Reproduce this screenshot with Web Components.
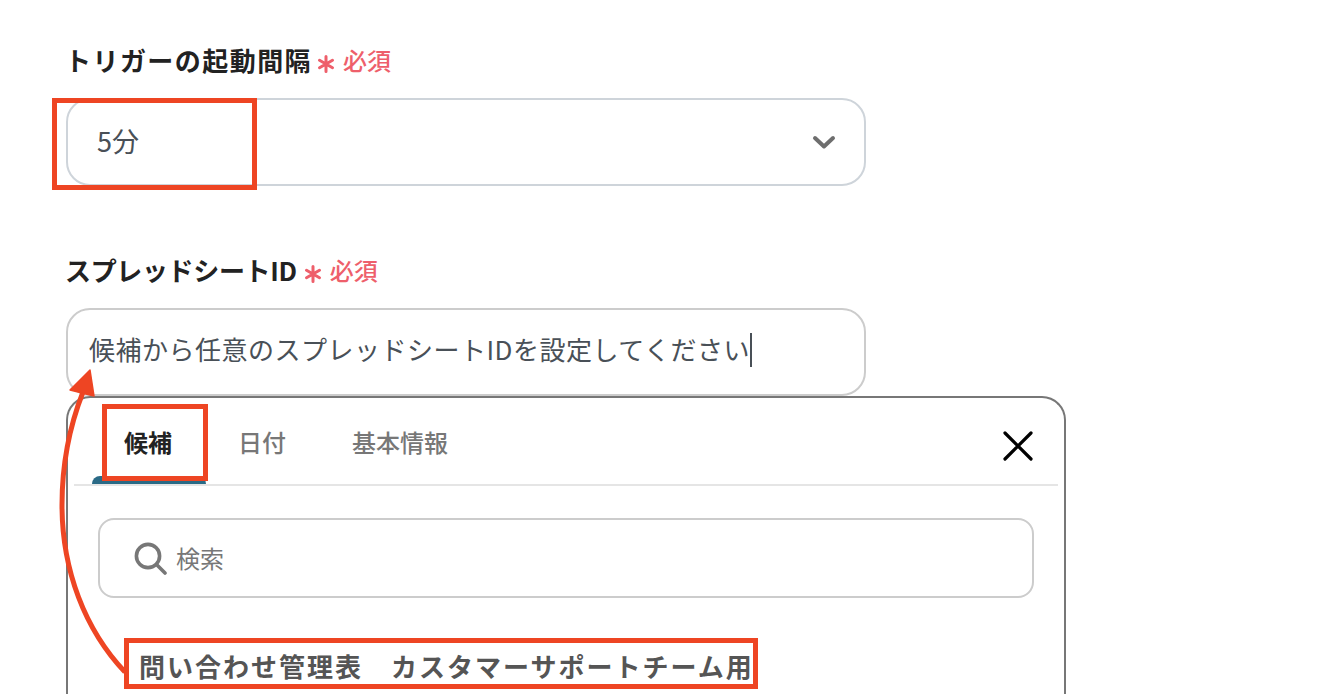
<!DOCTYPE html>
<html lang="ja">
<head>
<meta charset="utf-8">
<title>トリガー設定</title>
<style>
  html, body { margin: 0; padding: 0; background: #fff; }
  body { height: 696px; overflow: hidden; font-family: "Noto Sans CJK JP", "Noto Sans", sans-serif; }
</style>
</head>
<body>
<trigger-form>
  <form-field label="トリガーの起動間隔" style="--label-spacing:1.45px;--req-gap:5px">
    <select-box value="5分"></select-box>
  </form-field>
  <form-field label="スプレッドシートID" style="--label-spacing:-0.35px;--req-gap:7px">
    <text-box value="候補から任意のスプレッドシートIDを設定してください"></text-box>
    <suggest-panel>
      <suggest-item>問い合わせ管理表　カスタマーサポートチーム用</suggest-item>
    </suggest-panel>
  </form-field>
</trigger-form>
<note-overlay></note-overlay>

<script>
"use strict";

class TriggerForm extends HTMLElement {
  constructor() {
    super();
    this.attachShadow({ mode: "open" }).innerHTML = `
      <style>
        :host { display: flex; flex-direction: column; gap: 70px; padding: 46px 0 0 66px; }
      </style>
      <slot></slot>`;
  }
}

class FormField extends HTMLElement {
  constructor() {
    super();
    this.attachShadow({ mode: "open" }).innerHTML = `
      <style>
        :host { display: block; }
        .label {
          display: flex; align-items: center; height: 30px; margin-bottom: 22px;
          font-size: 26px; font-weight: 700; color: #222;
          letter-spacing: var(--label-spacing, 0);
        }
        .text { margin: -3px 0 0 -1px; }
        .req { display: flex; align-items: center; margin-left: var(--req-gap, 6px); font-size: 24px; font-weight: 500; color: #ee5f6b; letter-spacing: 0; }
        .req span { margin-top: -3px; margin-left: -1px; }
        svg { width: 18px; height: 18px; margin: 6px 9px 0 0; }
      </style>
      <div class="label">
        <span class="text"></span>
        <span class="req">
          <svg viewBox="0 0 18 18" fill="none" stroke="#ee5f6b" stroke-width="3" stroke-linecap="round">
            <path d="M9 1.5v15M2.5 5.2l13 7.6M15.5 5.2l-13 7.6"/>
          </svg><span>必須</span></span>
      </div>
      <slot></slot>`;
    this.shadowRoot.querySelector(".text").textContent = this.getAttribute("label");
  }
}

class SelectBox extends HTMLElement {
  constructor() {
    super();
    this.attachShadow({ mode: "open" }).innerHTML = `
      <style>
        :host {
          display: flex; align-items: center; justify-content: space-between; box-sizing: border-box;
          width: 800px; height: 88px; padding: 0 28px 0 29px;
          border: 2px solid #ced4da; border-radius: 24px;
          font-size: 27px; color: #495057;
        }
        .value { margin-bottom: 4px; }
        svg { width: 24px; height: 16px; }
      </style>
      <span class="value"></span>
      <svg viewBox="0 0 24 16" fill="none" stroke="#6e6e6e" stroke-width="4" stroke-linecap="round" stroke-linejoin="round">
        <path d="M3 4l9 8.5L21 4"/>
      </svg>`;
    this.shadowRoot.querySelector(".value").textContent = this.getAttribute("value");
  }
}

class TextBox extends HTMLElement {
  constructor() {
    super();
    this.attachShadow({ mode: "open" }).innerHTML = `
      <style>
        :host {
          display: flex; align-items: center; box-sizing: border-box;
          width: 800px; height: 88px; padding: 0 21px;
          border: 2px solid #ccc; border-radius: 24px;
          font-size: 26px; color: #495057;
        }
        .value { margin-bottom: 8px; letter-spacing: 0.5px; }
        .caret { width: 2px; height: 34px; margin-bottom: 4px; background: #495057; }
      </style>
      <span class="value"></span><span class="caret"></span>`;
    this.shadowRoot.querySelector(".value").textContent = this.getAttribute("value");
  }
}

class SuggestPanel extends HTMLElement {
  constructor() {
    super();
    this.attachShadow({ mode: "open" }).innerHTML = `
      <style>
        :host {
          display: block; box-sizing: border-box; width: 1000px; height: 298px;
          border: 2px solid #777; border-bottom: 0; border-radius: 24px 24px 0 0; background: #fff;
        }
        .head {
          display: flex; align-items: stretch; justify-content: space-between; height: 86px;
          margin: 0 6px; padding: 0 24px 0 18px; border-bottom: 2px solid #e5e5e5;
        }
        .tabs { display: flex; }
        .tab {
          position: relative; display: flex; align-items: center; padding: 0 34px 0 32px;
          font-size: 24px; font-weight: 500; color: #777;
        }
        .tab.on { font-weight: 700; color: #222; }
        .tab.on::after {
          content: ""; position: absolute; left: 0; right: 0; bottom: 0; height: 8px;
          background: #2a6a86; border-radius: 8px 8px 0 0;
        }
        .close { align-self: center; width: 32px; height: 32px; margin: 10px 0 0 0; }
        .search {
          display: flex; align-items: center; gap: 9px; box-sizing: border-box;
          height: 80px; margin: 32px 30px 0; padding: 0 0 0 34px;
          border: 2px solid #ccc; border-radius: 16px;
          font-size: 24px; color: #777;
        }
        .search span { margin-bottom: 2px; }
        .search svg { width: 33px; height: 33px; }
        .list { padding: 0 0 0 71px; margin-top: 49px; }
      </style>
      <div class="head">
        <div class="tabs">
          <div class="tab on">候補</div>
          <div class="tab">日付</div>
          <div class="tab">基本情報</div>
        </div>
        <svg class="close" viewBox="0 0 32 32" fill="none" stroke="#000" stroke-width="3.2" stroke-linecap="round">
          <path d="M3 3l26 26M29 3L3 29"/>
        </svg>
      </div>
      <div class="search">
        <svg viewBox="0 0 33 33" fill="none" stroke="#777" stroke-width="3.6" stroke-linecap="round">
          <circle cx="14" cy="14" r="11.6"/><path d="M23 23l8 8"/>
        </svg>
        <span>検索</span>
      </div>
      <div class="list"><slot></slot></div>`;
  }
}

class SuggestItem extends HTMLElement {
  constructor() {
    super();
    this.attachShadow({ mode: "open" }).innerHTML = `
      <style>
        :host { display: block; font-size: 26px; line-height: 38px; font-weight: 700; color: #555; letter-spacing: 2px; white-space: nowrap; }
      </style>
      <slot></slot>`;
  }
}

// red review marks drawn over the form
class NoteOverlay extends HTMLElement {
  constructor() {
    super();
    this.attachShadow({ mode: "open" }).innerHTML = `
      <style>
        :host { position: absolute; left: 0; top: 0; width: 1328px; height: 696px; pointer-events: none; }
        svg { display: block; }
      </style>
      <svg width="1328" height="696" viewBox="0 0 1328 696" fill="none" stroke="#ee4523" stroke-width="5">
        <rect x="54.5" y="100.5" width="200" height="87"/>
        <rect x="104.5" y="406.5" width="101" height="72"/>
        <rect x="126.5" y="640.5" width="629" height="46"/>
        <path d="M125 672C85 630 62 570 62 505C62 465 70 425 83 392"/>
        <path d="M70 390L90 370L94 396Z" fill="#ee4523" stroke="#ee4523" stroke-width="1.5" stroke-linejoin="round"/>
      </svg>`;
  }
}

customElements.define("trigger-form", TriggerForm);
customElements.define("form-field", FormField);
customElements.define("select-box", SelectBox);
customElements.define("text-box", TextBox);
customElements.define("suggest-panel", SuggestPanel);
customElements.define("suggest-item", SuggestItem);
customElements.define("note-overlay", NoteOverlay);
</script>
</body>
</html>
